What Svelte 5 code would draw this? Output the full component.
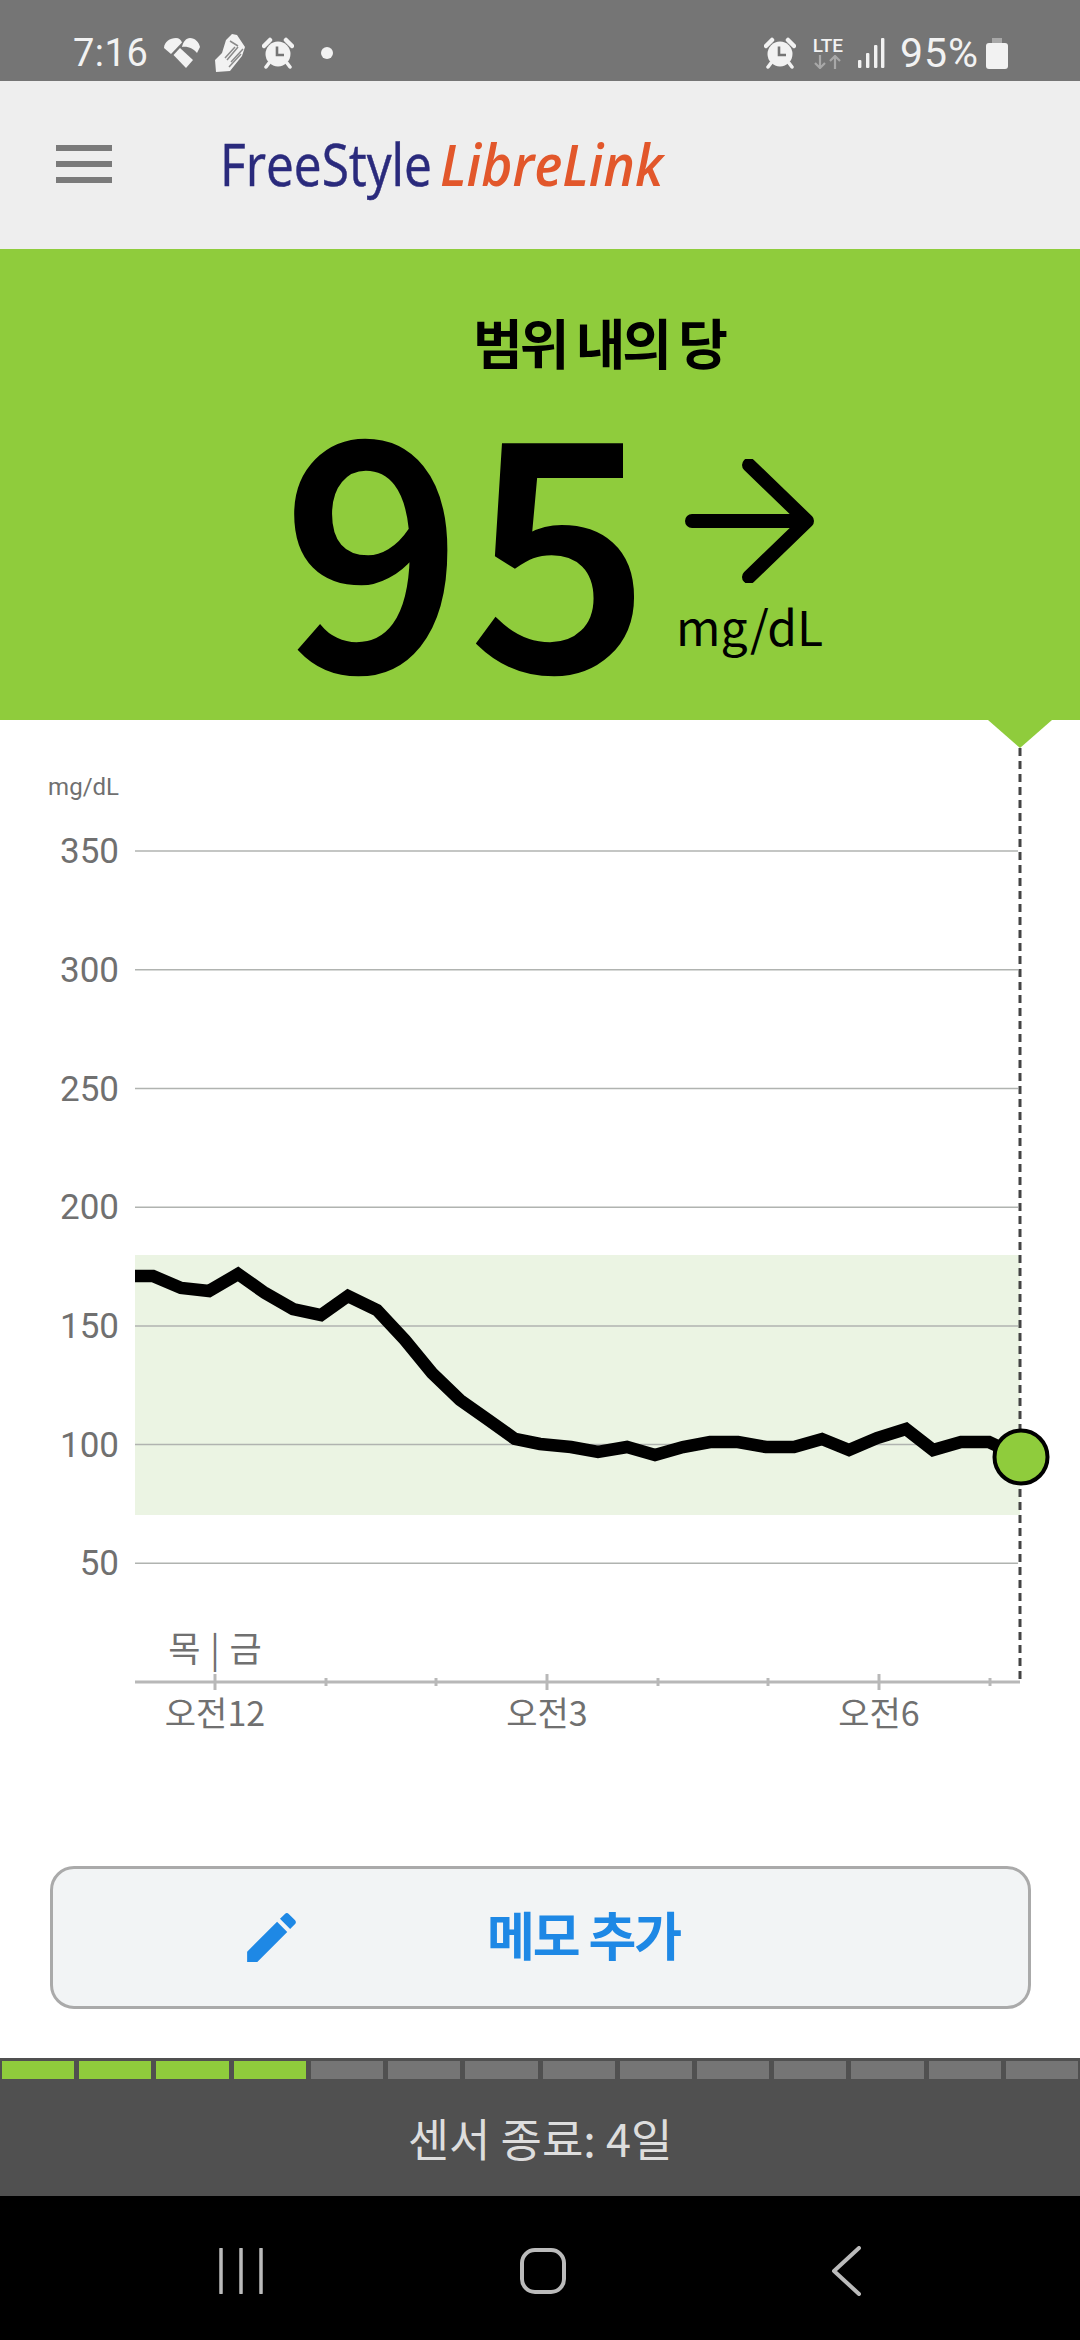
<script>
	const gridValues = [350, 300, 250, 200, 150, 100, 50];
	const gridY = (v) => 1682 - (v / 50) * 118.7;

	// glucose trace, in page pixels
	const trace = [
		[135, 1276], [153, 1276], [181, 1288], [209, 1291], [238, 1274], [265, 1293], [293, 1309],
		[321, 1315], [348, 1296], [377, 1310], [405, 1340], [432, 1373], [460, 1400], [487, 1419],
		[515, 1439], [540, 1444], [571, 1447], [598, 1452], [627, 1447], [655, 1455], [683, 1447],
		[710, 1442], [738, 1442], [766, 1447], [794, 1447], [822, 1439], [849, 1450], [877, 1438],
		[906, 1429], [933, 1450], [961, 1442], [989, 1442], [1021, 1457]
	];
	const tracePoints = trace.map((p) => p.join(',')).join(' ');

	const majorTicks = [
		{ x: 215, label: '오전12' },
		{ x: 547, label: '오전3' },
		{ x: 879, label: '오전6' }
	];
	const minorTicks = [326, 436, 658, 768, 990];

	const sensorDays = Array.from({ length: 14 }, (_, i) => i < 4);
</script>

{#snippet alarm()}
	<svg class="alarm" viewBox="0 0 32 32">
		<circle cx="16" cy="17" r="12.500" fill="#f2f2f2" />
		<path d="M2 9 8 3M30 9 24 3" stroke="#f2f2f2" stroke-width="4.500" stroke-linecap="round" />
		<path d="M7 26 4 30M25 26l3 4" stroke="#f2f2f2" stroke-width="3.500" stroke-linecap="round" />
		<path d="M15 9.500V18h7" fill="none" stroke="#757575" stroke-width="2.600" />
	</svg>
{/snippet}

<div class="screen">
	<div class="status">
		<div class="status-left">
			<span class="clock">7:16</span>
			<svg class="heart" viewBox="0 0 37 30">
				<path d="M1 10C1 4 7 0 13 0c3 0 5 2 6 4.500L8 16z" fill="#f2f2f2" />
				<path d="M10.500 17 17 10l13 12-7 8z" fill="#f2f2f2" />
				<path d="M19 9c1-5 4-9 8-9 5 0 9 4 10 9-1 2-2 4-3 6-3-4-9-7-15-6z" fill="#f2f2f2" />
			</svg>
			<svg class="shoe" viewBox="0 0 32 38">
				<path d="M18 0 23 1 31 13 28 22 16 37 2 38 1 26 8 19 12 6z" fill="#f2f2f2" />
				<path d="M29 15 17 28M27 20 15 33M24 13 13 26M21 13 11 24M16 7l8 5" stroke="#8a8a8a" stroke-width="1.500" />
			</svg>
			{@render alarm()}
			<span class="dot"></span>
		</div>
		<div class="status-right">
			{@render alarm()}
			<div class="lte">
				<span>LTE</span>
				<svg class="lte-arrows" viewBox="0 0 32 14">
					<path d="M8 0v13M3 8l5 5 5-5M23 14V1M18 6l5-5 5 5" fill="none" stroke="#a8a8a8" stroke-width="2.200" />
				</svg>
			</div>
			<svg class="signal" viewBox="0 0 28 30">
				<rect x="1" y="22" width="3.400" height="8" rx="1" />
				<rect x="9" y="15" width="3.400" height="15" rx="1" />
				<rect x="17" y="7" width="3.400" height="23" rx="1" />
				<rect x="24" y="0" width="3.400" height="30" rx="1" />
			</svg>
			<span class="percent">95%</span>
			<svg class="battery" viewBox="0 0 22 31">
				<path d="M6 0h10v5H6z" fill="#a8a8a8" />
				<rect x="0" y="5" width="22" height="26" rx="3" fill="#f2f2f2" />
			</svg>
		</div>
	</div>

	<header class="topbar">
		<div class="menu"><span></span><span></span><span></span></div>
		<div class="logo">
			<span class="logo-free">FreeStyle</span>
			<span class="logo-libre">LibreLink</span>
		</div>
	</header>

	<section class="hero">
		<h1>범위 내의 당</h1>
		<div class="reading">
			<span class="value">95</span>
			<div class="trend">
				<svg class="arrow" viewBox="0 0 130 124">
					<path d="M7 62h115M64 6l58 56-58 56" fill="none" stroke="#000" stroke-width="14" stroke-linecap="round" stroke-linejoin="round" />
				</svg>
				<span class="unit">mg/dL</span>
			</div>
		</div>
		<span class="pointer"></span>
	</section>

	<svg class="chart" viewBox="0 720 1080 1146">
		<rect x="135" y="1255" width="885" height="260" fill="#ebf4e3" />
		<text class="unit-small" x="119" y="795">mg/dL</text>
		{#each gridValues as v}
			<line x1="135" x2="1018" y1={gridY(v)} y2={gridY(v)} stroke="#b0b3b0" stroke-width="1.500" />
			<text class="axis-label" x="119" y={gridY(v) + 12}>{v}</text>
		{/each}
		<line x1="135" x2="1020" y1="1682" y2="1682" stroke="#b8b8b8" stroke-width="3" />
		{#each majorTicks as t}
			<line x1={t.x} x2={t.x} y1="1674" y2="1690" stroke="#b8b8b8" stroke-width="3" />
			<text class="time-label" x={t.x} y="1726">{t.label}</text>
		{/each}
		{#each minorTicks as x}
			<line x1={x} x2={x} y1="1678" y2="1686" stroke="#b8b8b8" stroke-width="3" />
		{/each}
		<text class="day-label" x="215" y="1662">목 | 금</text>
		<line x1="1020" x2="1020" y1="748" y2="1680" stroke="#444" stroke-width="3" stroke-dasharray="8 5" />
		<polyline points={tracePoints} fill="none" stroke="#000" stroke-width="12.500" stroke-linejoin="miter" />
		<circle cx="1021" cy="1457" r="26.500" fill="#8fcc3c" stroke="#000" stroke-width="4" />
	</svg>

	<button class="note">
		<svg class="pencil" viewBox="0 0 24 24">
			<path d="M3 17.250V21h3.750L17.810 9.940l-3.750-3.750L3 17.250zM20.710 7.040c.39-.39.39-1.020 0-1.410l-2.340-2.340c-.39-.39-1.020-.39-1.410 0l-1.830 1.830 3.750 3.750 1.830-1.830z" fill="#1e88e5" />
		</svg>
		<span>메모 추가</span>
	</button>

	<div class="sensor">
		<div class="segments">
			{#each sensorDays as used}
				<span class="segment" class:used></span>
			{/each}
		</div>
		<p>센서 종료: 4일</p>
	</div>

	<nav class="navbar">
		<svg class="nav-recent" viewBox="0 0 44 46">
			<path d="M2 1v44M22 1v44M42 1v44" stroke="#bbb" stroke-width="3.500" stroke-linecap="round" />
		</svg>
		<span class="nav-home"></span>
		<svg class="nav-back" viewBox="0 0 30 50">
			<path d="M28 2 3 25l25 23" fill="none" stroke="#bbb" stroke-width="4" stroke-linecap="round" stroke-linejoin="round" />
		</svg>
	</nav>
</div>

<style>
	:global(body) {
		margin: 0;
		background: #fff;
	}

	.screen {
		width: 1080px;
		height: 2340px;
		display: flex;
		flex-direction: column;
		font-family: 'Noto Sans CJK KR', 'Noto Sans', sans-serif;
		overflow: hidden;
	}

	/* status bar */
	.status {
		height: 81px;
		background: #757575;
		color: #f2f2f2;
		display: flex;
		justify-content: space-between;
		align-items: center;
		padding: 25px 72px 0 73px;
		box-sizing: border-box;
		font-family: Roboto, sans-serif;
		font-weight: 400;
	}

	.status-left,
	.status-right {
		display: flex;
		align-items: center;
	}

	.clock {
		font-size: 38px;
		line-height: 40px;
		letter-spacing: 0.500px;
	}

	.percent {
		font-size: 41px;
		line-height: 40px;
		letter-spacing: 1px;
		margin-left: 15px;
	}

	.heart {
		width: 37px;
		height: 30px;
		margin-left: 15px;
	}

	.shoe {
		width: 32px;
		height: 38px;
		margin-left: 14px;
	}

	.alarm {
		width: 32px;
		height: 32px;
	}

	.status-left .alarm {
		margin-left: 16px;
	}

	.dot {
		width: 12px;
		height: 12px;
		border-radius: 50%;
		background: #f2f2f2;
		margin-left: 27px;
	}

	.lte {
		display: flex;
		flex-direction: column;
		align-items: center;
		margin-left: 15px;
		width: 34px;
		font-size: 19px;
		font-weight: 500;
		line-height: 16px;
	}

	.lte-arrows {
		width: 32px;
		height: 14px;
		margin-top: 1px;
	}

	.signal {
		width: 28px;
		height: 30px;
		margin-left: 12px;
		fill: #f2f2f2;
	}

	.battery {
		width: 22px;
		height: 31px;
		margin-left: 7px;
	}

	/* app bar */
	.topbar {
		height: 168px;
		background: #eee;
		display: flex;
		align-items: center;
		padding-left: 56px;
		box-sizing: border-box;
	}

	.menu {
		width: 56px;
		display: flex;
		flex-direction: column;
		gap: 10px;
		margin-top: -2px;
	}

	.menu span {
		height: 6px;
		background: #7a7a7a;
	}

	.logo {
		display: flex;
		align-items: baseline;
		margin-left: 108px;
		margin-top: -4px;
		font-family: 'Open Sans', sans-serif;
		line-height: 60px;
		white-space: nowrap;
	}

	.logo span {
		display: inline-block;
		transform-origin: left;
	}

	.logo-free {
		width: 220px;
		font-size: 59px;
		font-weight: 500;
		color: #2a2a7c;
		-webkit-text-stroke: 0.500px #2a2a7c;
		transform: scaleX(0.842);
	}

	.logo-libre {
		font-size: 57px;
		font-style: italic;
		font-weight: 600;
		color: #e2572b;
		transform: scaleX(0.934);
	}

	/* current reading */
	.hero {
		position: relative;
		height: 471px;
		background: #8fcc3c;
		color: #000;
		display: flex;
		flex-direction: column;
		align-items: center;
	}

	h1 {
		margin: 61px 0 0 118px;
		font-size: 54px;
		line-height: 64px;
		font-weight: 700;
		letter-spacing: -3px;
	}

	.reading {
		display: flex;
		align-items: flex-start;
		align-self: flex-start;
		margin: 34px 0 0 283px;
	}

	.value {
		font-size: 314px;
		line-height: 250px;
		font-weight: 500;
		letter-spacing: 8px;
		-webkit-text-stroke: 4px #000;
	}

	.trend {
		display: flex;
		flex-direction: column;
		align-items: center;
		margin-left: 19px;
		margin-top: 51px;
	}

	.arrow {
		width: 130px;
		height: 124px;
	}

	.unit {
		font-size: 48px;
		line-height: 60px;
		margin-top: 12px;
		margin-right: 2px;
	}

	.pointer {
		position: absolute;
		left: 988px;
		top: 100%;
		width: 0;
		height: 0;
		border-left: 32px solid transparent;
		border-right: 32px solid transparent;
		border-top: 28px solid #8fcc3c;
	}

	/* chart */
	.chart {
		display: block;
		width: 1080px;
		height: 1146px;
		flex: none;
	}

	.chart text {
		fill: #707070;
	}

	.unit-small {
		font-family: Roboto, sans-serif;
		font-size: 24px;
		text-anchor: end;
	}

	.axis-label {
		font-family: Roboto, sans-serif;
		font-size: 35px;
		text-anchor: end;
	}

	.time-label,
	.day-label {
		font-family: 'Noto Sans CJK KR', Roboto, sans-serif;
		font-size: 34px;
		text-anchor: middle;
	}

	.day-label {
		font-size: 35px;
		word-spacing: 2px;
	}

	/* add note */
	.note {
		margin: 0 49px 0 50px;
		height: 143px;
		flex: none;
		display: flex;
		align-items: center;
		background: #f2f4f5;
		border: 3px solid #aaa;
		border-radius: 24px;
		padding: 0 0 0 186px;
		box-sizing: border-box;
		font-family: inherit;
		font-size: 52px;
		font-weight: 700;
		letter-spacing: -2px;
		color: #1e88e5;
	}

	.note span {
		margin-top: -8px;
	}

	.pencil {
		width: 65px;
		height: 65px;
		margin-right: 183px;
	}

	/* sensor life */
	.sensor {
		margin-top: 49px;
		height: 138px;
		background: #505050;
		box-sizing: border-box;
		padding-top: 3px;
	}

	.segments {
		display: flex;
		gap: 5px;
		padding: 0 2px;
	}

	.segment {
		flex: 1;
		height: 18px;
		background: #757575;
	}

	.segment.used {
		background: #8fcc3c;
	}

	.sensor p {
		margin: 29px 0 0;
		text-align: center;
		font-size: 45px;
		line-height: 60px;
		color: #ddd;
	}

	/* nav bar */
	.navbar {
		flex: 1;
		background: #000;
		display: flex;
		align-items: center;
		padding: 5px 0 0 219px;
		box-sizing: border-box;
	}

	.nav-recent {
		width: 44px;
		height: 46px;
	}

	.nav-home {
		width: 46px;
		height: 46px;
		box-sizing: border-box;
		border: 4px solid #bbb;
		border-radius: 15px;
		margin-left: 257px;
	}

	.nav-back {
		width: 30px;
		height: 50px;
		margin-left: 265px;
	}
</style>
